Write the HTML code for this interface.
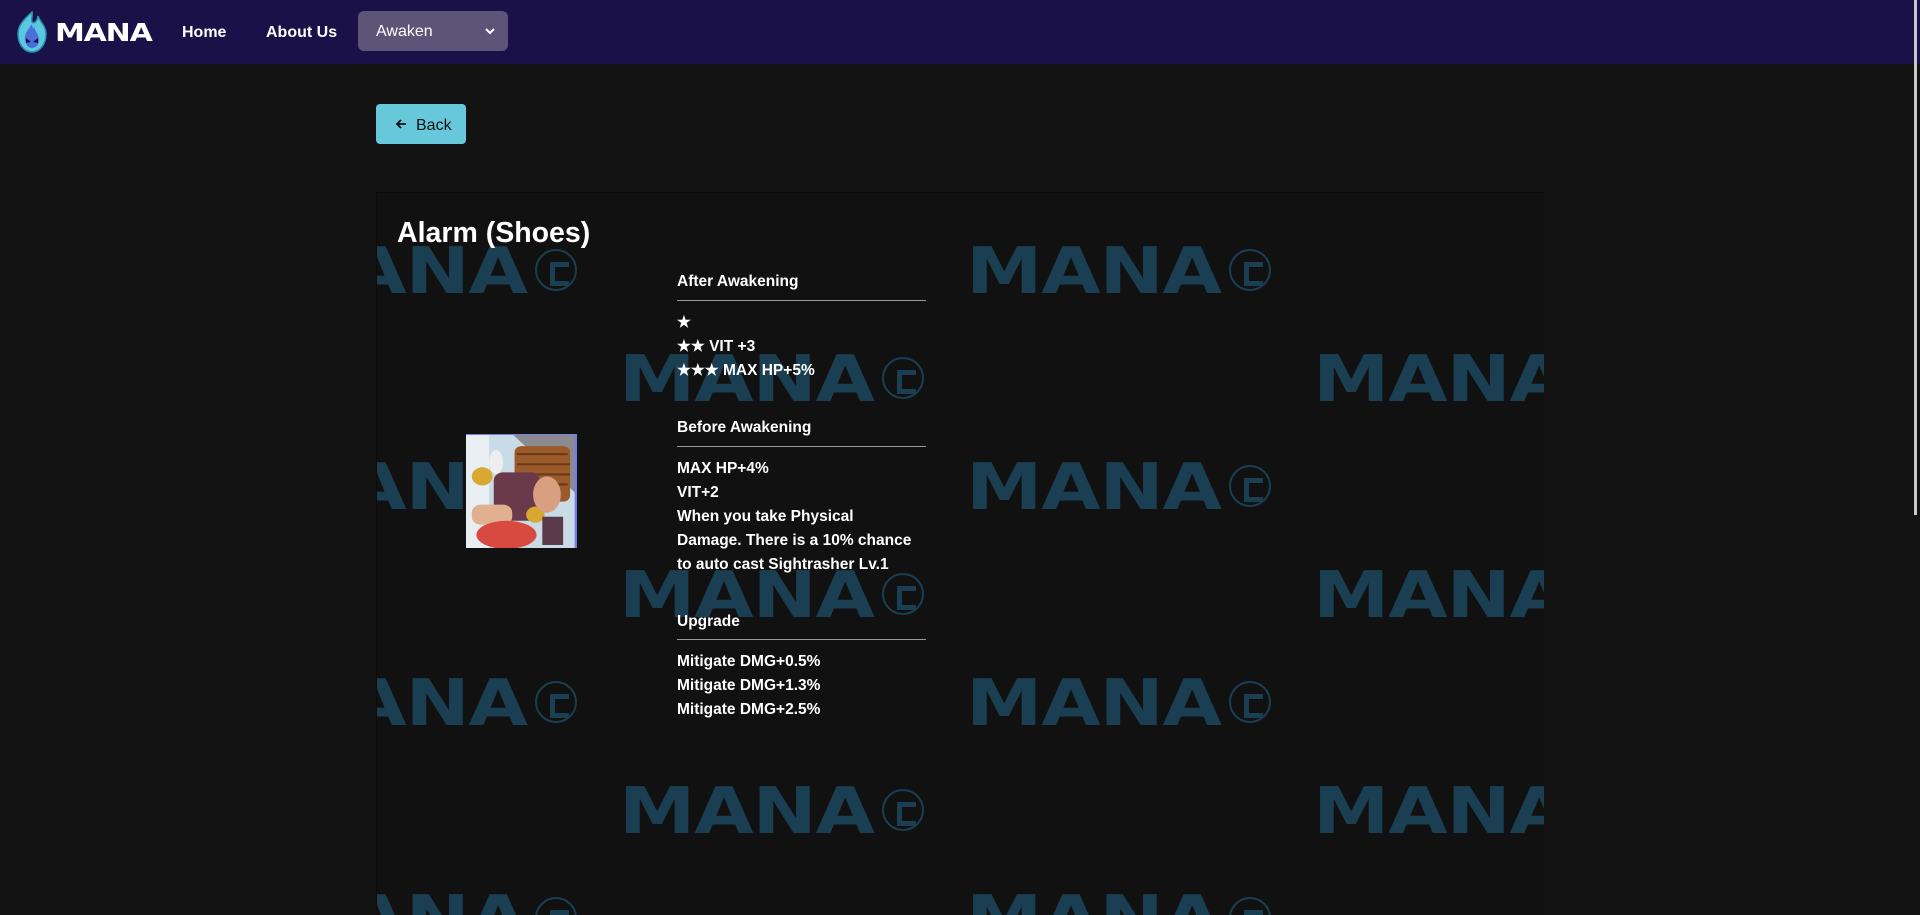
<!DOCTYPE html>
<html><head><meta charset="utf-8"><style>
*{margin:0;padding:0;box-sizing:border-box}
body{width:1920px;height:915px;overflow:hidden;background:#121212;font-family:"Liberation Sans",sans-serif;position:relative;color:#fff}
.nav{position:absolute;left:0;top:0;width:1920px;height:64px;background:#1a1148}
.abs{position:absolute}
.navl{font-size:16px;font-weight:bold;color:#fff;top:24px}
.dd{left:358px;top:11px;width:150px;height:40px;background:#5d5577;border-radius:6px}
.back{left:376px;top:104px;width:90px;height:40px;background:#67c8db;border-radius:4px;color:#111;font-size:16px}
.card{left:376px;top:192px;width:1168px;height:723px;background:#111;border-top:1px solid #0a0a0a;border-left:1px solid #0c0c0c;overflow:hidden}
.wm{position:absolute;width:320px;height:50px}
.wm span{position:absolute;left:0;top:-6px;font-family:"DejaVu Sans",sans-serif;font-weight:bold;font-size:64px;color:#1b3f52;transform:scaleX(1.2);transform-origin:0 0;letter-spacing:-1px;line-height:1}
.wm i{position:absolute;left:263px;top:3px;width:42px;height:42px;border:2px solid #1b3f52;border-radius:50%}
.wm i:after{content:"";position:absolute;left:13px;top:11px;width:14px;height:14px;border:5px solid #1b3f52;border-right:none}
.t{position:absolute;font-size:15.5px;font-weight:bold;white-space:nowrap;line-height:24px;left:300px}
.hr{position:absolute;left:300px;width:249px;height:1px;background:#9a9a9a}
</style></head><body>
<div class="nav">
 <svg class="abs" style="left:12px;top:10px" width="40" height="44" viewBox="0 0 40 44">
  <path d="M20 2 C14 8 6 14 6 24 C6 34 12 42 20 42 C28 42 34 34 34 24 C34 16 28 12 26 6 C25 12 22 14 20 12 C19 8 21 5 20 2Z" fill="#5bc8e0" stroke="#2a8fb0" stroke-width="1.5"/>
  <path d="M20 14 C16 20 12 24 13 30 C14 36 17 38 20 38 C23 38 27 36 27 30 C27 24 23 22 22 16 C21 20 21 20 20 14Z" fill="#4a6fd8"/>
  <path d="M14 28 L19 32 L14 33Z M26 28 L21 32 L26 33Z" fill="#1a1148"/>
 </svg>
 <div class="abs" style="left:55px;top:20px;font-family:'DejaVu Sans',sans-serif;font-weight:bold;font-size:25px;line-height:25px;color:#fff;transform:scaleX(1.2);transform-origin:0 0;letter-spacing:-1px">MANA</div>
 <div class="abs navl" style="left:182px">Home</div>
 <div class="abs navl" style="left:266px">About Us</div>
 <div class="abs dd"><span class="abs" style="left:18px;top:12px;font-size:16px;color:#fff">Awaken</span>
  <svg class="abs" style="left:126px;top:16px" width="12" height="8" viewBox="0 0 12 8"><path d="M2 2 L6 6 L10 2" stroke="#fff" stroke-width="2" fill="none"/></svg></div>
</div>
<div class="abs back">
 <svg class="abs" style="left:19px;top:14px" width="12" height="12" viewBox="0 0 12 12"><path d="M11 6 H2 M6 2 L2 6 L6 10" stroke="#111" stroke-width="1.8" fill="none"/></svg>
 <span class="abs" style="left:40px;top:13px">Back</span>
</div>
<div class="abs card">
 <div class="wm" style="left:-105px;top:53px"><span>MANA</span><i></i></div>
 <div class="wm" style="left:589px;top:53px"><span>MANA</span><i></i></div>
 <div class="wm" style="left:242px;top:161px"><span>MANA</span><i></i></div>
 <div class="wm" style="left:936px;top:161px"><span>MANA</span><i></i></div>
 <div class="wm" style="left:-105px;top:269px"><span>MANA</span><i></i></div>
 <div class="wm" style="left:589px;top:269px"><span>MANA</span><i></i></div>
 <div class="wm" style="left:242px;top:377px"><span>MANA</span><i></i></div>
 <div class="wm" style="left:936px;top:377px"><span>MANA</span><i></i></div>
 <div class="wm" style="left:-105px;top:485px"><span>MANA</span><i></i></div>
 <div class="wm" style="left:589px;top:485px"><span>MANA</span><i></i></div>
 <div class="wm" style="left:242px;top:593px"><span>MANA</span><i></i></div>
 <div class="wm" style="left:936px;top:593px"><span>MANA</span><i></i></div>
 <div class="wm" style="left:-105px;top:701px"><span>MANA</span><i></i></div>
 <div class="wm" style="left:589px;top:701px"><span>MANA</span><i></i></div>

 <div class="abs" style="left:20px;top:23px;font-size:28.5px;font-weight:bold;line-height:34px">Alarm (Shoes)</div>

 <svg class="abs" style="left:89px;top:241px" width="111" height="114" viewBox="0 0 96 113" preserveAspectRatio="none">
  <rect width="96" height="113" fill="#c9dbe6"/>
  <rect x="0" y="0" width="20" height="113" fill="#e8eef2"/>
  <polygon points="40,0 96,0 96,60" fill="#8a8a90"/>
  <rect x="42" y="12" width="48" height="55" rx="6" fill="#9a5a2a"/>
  <path d="M44 20 H88 M44 30 H90 M44 40 H90 M44 50 H88" stroke="#6a3a18" stroke-width="2"/>
  <ellipse cx="26" cy="28" rx="6" ry="12" fill="#eee"/>
  <rect x="24" y="38" width="40" height="48" rx="8" fill="#6a3a4a"/>
  <circle cx="14" cy="42" r="9" fill="#d8a830"/>
  <circle cx="60" cy="80" r="8" fill="#d8a830"/>
  <ellipse cx="70" cy="60" rx="12" ry="18" fill="#d8a080"/>
  <rect x="5" y="70" width="35" height="20" rx="8" fill="#e0b090"/>
  <ellipse cx="35" cy="100" rx="26" ry="14" fill="#d84a40"/>
  <rect x="66" y="82" width="18" height="28" fill="#5a3a4a"/>
  <rect x="94" y="0" width="2" height="113" fill="#7b7be8"/>
  <rect x="0" y="0" width="96" height="1" fill="#7b7be8"/>
 </svg>

 <div class="t" style="top:77px">After Awakening</div>
 <div class="hr" style="top:107px"></div>
 <div class="t" style="top:118px">★<br>★★ VIT +3<br>★★★ MAX HP+5%</div>
 <div class="t" style="top:223px">Before Awakening</div>
 <div class="hr" style="top:253px"></div>
 <div class="t" style="top:264px">MAX HP+4%<br>VIT+2<br>When you take Physical<br>Damage. There is a 10% chance<br>to auto cast Sightrasher Lv.1</div>
 <div class="t" style="top:417px">Upgrade</div>
 <div class="hr" style="top:446px"></div>
 <div class="t" style="top:457px">Mitigate DMG+0.5%<br>Mitigate DMG+1.3%<br>Mitigate DMG+2.5%</div>
</div>
<div class="abs" style="left:1914px;top:0;width:3px;height:515px;background:#c8c8c8"></div>
</body></html>
